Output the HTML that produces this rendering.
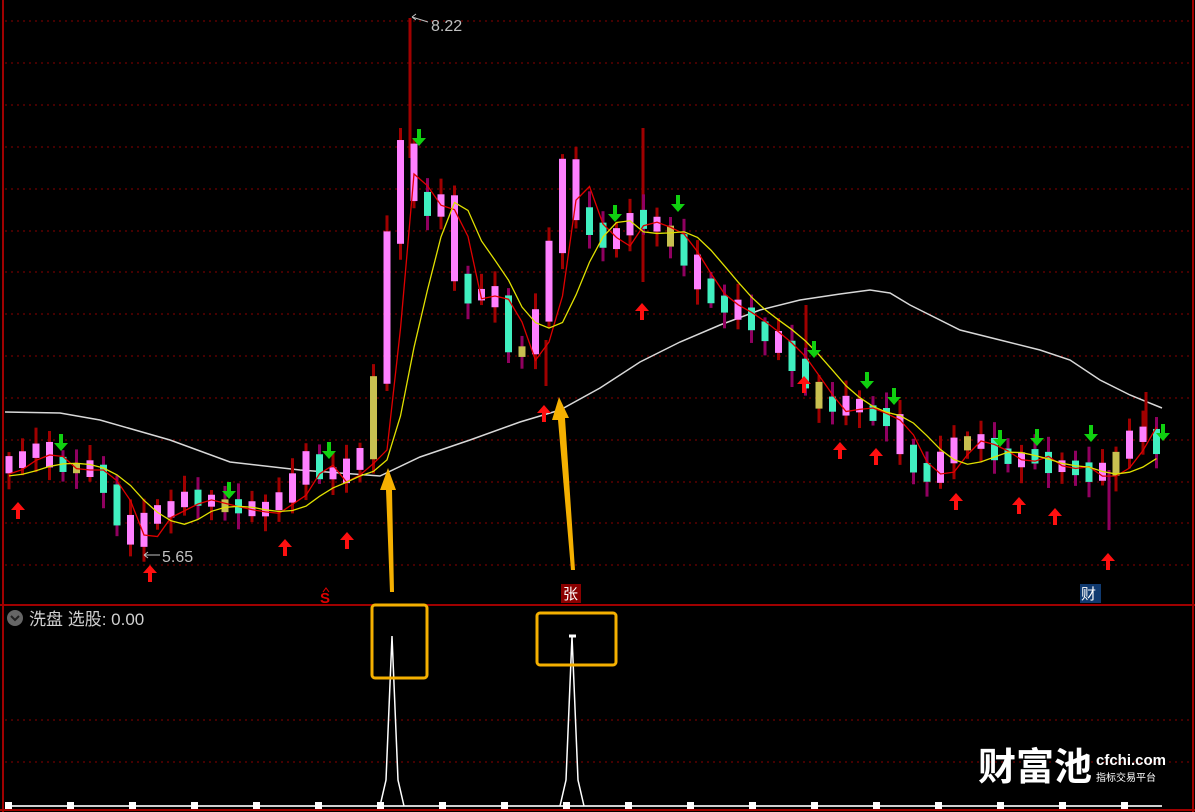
<!DOCTYPE html>
<html><head><meta charset="utf-8"><style>
html,body{margin:0;padding:0;background:#000;width:1195px;height:812px;overflow:hidden;font-family:"Liberation Sans","Noto Sans CJK SC",sans-serif}
#c{position:absolute;left:0;top:0}
</style></head><body>
<svg id="c" width="1195" height="812" xmlns="http://www.w3.org/2000/svg">
<g id="grid" stroke="#8a0000" stroke-width="1" stroke-dasharray="2,4"></g>
<line x1="3" y1="0" x2="3" y2="812" stroke="#a00000" stroke-width="2"/>
<line x1="1193" y1="0" x2="1193" y2="812" stroke="#a00000" stroke-width="2"/>
<line x1="0" y1="605" x2="1195" y2="605" stroke="#a00000" stroke-width="2"/>
<line x1="0" y1="810" x2="1195" y2="810" stroke="#a00000" stroke-width="2"/>
<polyline fill="none" stroke="#d8d8d8" stroke-width="1.5" points="5,412 60,413 100,420 170,440 230,462 300,470 380,476 420,457 470,440 520,422 560,410 600,388 640,362 680,342 720,325 760,310 800,300 840,294 870,290 890,293 910,305 960,330 1000,340 1040,350 1070,360 1100,380 1130,395 1162,408"/>
<g id="extra" stroke-width="3">
<line x1="410" y1="18" x2="410" y2="158" stroke="#a00000"/>
<line x1="643" y1="128" x2="643" y2="282" stroke="#a00000"/>
<line x1="806" y1="305" x2="806" y2="368" stroke="#a00000"/>
<line x1="1146" y1="392" x2="1146" y2="440" stroke="#a00000"/>
<line x1="1109" y1="470" x2="1109" y2="530" stroke="#900060"/>
<line x1="546" y1="340" x2="546" y2="386" stroke="#a00000"/>
</g>
<g id="candles"></g>
<polyline id="ma5" fill="none" stroke="#e00000" stroke-width="1.3"/>
<polyline id="ma10" fill="none" stroke="#e0e000" stroke-width="1.3"/>
<g id="arrows"></g>
<text x="431" y="31" fill="#c0c0c0" font-size="16">8.22</text>
<path d="M428,22 L412,17 M412,17 l4,-3 M412,17 l4,3" stroke="#c0c0c0" fill="none"/>
<text x="162" y="562" fill="#c0c0c0" font-size="16">5.65</text>
<path d="M160,555 L144,555 M144,555 l4,-3 M144,555 l4,3" stroke="#c0c0c0" fill="none"/>
<text x="320" y="603" fill="#e00000" font-size="15" font-weight="bold">S</text>
<path d="M323,592 l3,-4 l3,4" stroke="#e00000" fill="none"/>
<rect x="561" y="584" width="20" height="19" fill="#8a0000"/>
<text x="563" y="599" fill="#fff" font-size="15">张</text>
<rect x="1080" y="584" width="21" height="19" fill="#103a70"/>
<text x="1081" y="599" fill="#fff" font-size="15">财</text>
<polygon points="390,592 394,592 392,490 396,490 388,468 380,490 386,490" fill="#f5b000"/>
<polygon points="571,570 575,570 565,418 569,418 559,397 552,420 558,420" fill="#f5b000"/>
<circle cx="15" cy="618" r="8" fill="#666"/>
<path d="M11,616 l4,4 l4,-4" stroke="#222" stroke-width="2" fill="none"/>
<text x="29" y="625" fill="#d0d0d0" font-size="17">洗盘 选股: 0.00</text>
<line x1="5" y1="806" x2="1162" y2="806" stroke="#d0d0d0" stroke-width="2"/>
<g id="sq" fill="#fff"></g>
<polyline fill="none" stroke="#fff" stroke-width="1.5" points="380,806 386,780 392,636 398,780 404,806"/>
<polyline fill="none" stroke="#fff" stroke-width="1.5" points="560,806 566,780 572,636 578,780 584,806"/>
<line x1="569" y1="636" x2="576" y2="636" stroke="#fff" stroke-width="3"/>
<rect x="372" y="605" width="55" height="73" rx="3" fill="none" stroke="#f5b000" stroke-width="3"/>
<rect x="537" y="613" width="79" height="52" rx="3" fill="none" stroke="#f5b000" stroke-width="3"/>
<text x="978" y="780" fill="#fff" font-size="38" font-weight="bold" font-family="Noto Sans CJK SC,sans-serif">财富池</text>
<text x="1096" y="765" fill="#fff" font-size="15" font-weight="bold">cfchi.com</text>
<text x="1096" y="781" fill="#fff" font-size="10" font-family="Noto Sans CJK SC,sans-serif">指标交易平台</text>
</svg>
<script>
(function(){
var ns="http://www.w3.org/2000/svg";
function el(p,t,a){var e=document.createElementNS(ns,t);for(var k in a)e.setAttribute(k,a[k]);document.getElementById(p).appendChild(e);return e;}
[21,63,105,147,189,231,272,314,356,398,440,482,523,565,720,762].forEach(function(y){el("grid","line",{x1:5,y1:y,x2:1192,y2:y});});
for(var x=8;x<1170;x+=62){el("sq","rect",{x:x-3,y:802,width:7,height:7});}
var P=[[8,470],[30,455],[50,448],[70,466],[100,466],[120,490],[135,530],[145,540],[160,515],[200,495],[240,505],[270,510],[300,490],[320,455],[340,480],[360,465],[380,445],[392,330],[402,220],[410,120],[420,185],[440,210],[455,200],[465,265],[475,300],[490,290],[510,300],[520,345],[530,360],[545,330],[560,270],[573,150],[590,215],[620,245],[640,215],[660,222],[680,232],[700,265],[720,295],[750,312],[780,335],[800,355],[820,385],[840,410],[860,402],[880,410],[900,420],[920,460],[940,476],[960,450],[975,435],[1000,447],[1020,460],[1040,452],[1060,466],[1080,462],[1100,476],[1120,466],[1140,440],[1150,420],[1165,450]];
function f(x){if(x<P[0][0])return P[0][1];for(var i=0;i<P.length-1;i++){if(x<=P[i+1][0]){var t=(x-P[i][0])/(P[i+1][0]-P[i][0]);return P[i][1]+t*(P[i+1][1]-P[i][1]);}}return P[P.length-1][1];}
var ma5=[],ma10=[];
for(var i=0;i<86;i++){var x=9+i*13.5;if(x>1166)break;var y=f(x),y2=f(x+13.5);var up=y2<y||i%3==0;
 var s=Math.sin(i*1.7)*8;var tp=Math.min(y,y2)-4+s*0.3,bt=Math.max(y,y2)+4+Math.abs(s)*0.5;
 if(bt-tp<4)bt=tp+4;
 var hi=tp-4-Math.abs(Math.sin(i*2.3))*12,lo=bt+4+Math.abs(Math.cos(i*1.3))*12;
 var col=up?"#ff80ff":"#40f0c0";var wc=up?"#a00000":"#900060";
 if(i%11==5)col="#c8c050";
 el("candles","line",{x1:x,y1:hi,x2:x,y2:lo,stroke:wc,"stroke-width":3});
 el("candles","rect",{x:x-3.5,y:tp,width:7,height:bt-tp,fill:col});
 ma5.push(x+","+(f(x-8)+4));
 var m=0;for(var k=0;k<8;k++)m+=f(x-k*8);ma10.push(x+","+(m/8+6));
}
document.getElementById("ma5").setAttribute("points",ma5.join(" "));
document.getElementById("ma10").setAttribute("points",ma10.join(" "));
function ua(x,y){el("arrows","path",{d:"M"+x+","+(y-9)+" l-7,8 h5 v9 h4 v-9 h5 z",fill:"#ff1010"});}
function da(x,y){el("arrows","path",{d:"M"+x+","+(y+9)+" l-7,-8 h5 v-9 h4 v9 h5 z",fill:"#10d010"});}
[[18,511],[150,574],[285,548],[347,541],[544,414],[642,312],[804,385],[840,451],[876,457],[956,502],[1019,506],[1055,517],[1108,562]].forEach(function(a){ua(a[0],a[1]);});
[[61,442],[229,490],[329,450],[419,137],[615,213],[678,203],[814,349],[867,380],[894,396],[1000,438],[1037,437],[1091,433],[1163,432]].forEach(function(a){da(a[0],a[1]);});
})();
</script>
</body></html>
